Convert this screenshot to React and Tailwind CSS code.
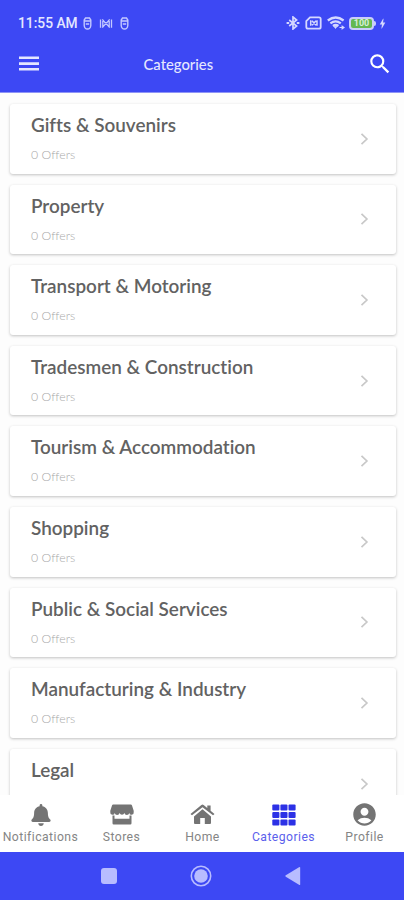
import { FaBell } from "react-icons/fa";
import { MdAccountCircle, MdSearch, MdBolt } from "react-icons/md";

const categories = [
  { name: "Gifts & Souvenirs", offers: "0 Offers" },
  { name: "Property", offers: "0 Offers" },
  { name: "Transport & Motoring", offers: "0 Offers" },
  { name: "Tradesmen & Construction", offers: "0 Offers" },
  { name: "Tourism & Accommodation", offers: "0 Offers" },
  { name: "Shopping", offers: "0 Offers" },
  { name: "Public & Social Services", offers: "0 Offers" },
  { name: "Manufacturing & Industry", offers: "0 Offers" },
  { name: "Legal" },
];

const tabs = [
  { label: "Notifications", icon: <FaBell size={22} /> },
  { label: "Stores", icon: <ShopIcon /> },
  { label: "Home", icon: <HomeIcon /> },
  { label: "Categories", icon: <GridIcon />, active: true },
  { label: "Profile", icon: <MdAccountCircle size={27} /> },
];

function ShopIcon() {
  return (
    <svg width="24" height="21" viewBox="0 0 24 21" fill="currentColor">
      <path d="M3.200.5h17.600q.9 0 1.200.9l1.700 5.300v1.600a2.200 2.200 0 0 1-4.400.6 2.500 2.500 0 0 1-4.900 0 2.500 2.500 0 0 1-4.800 0 2.500 2.500 0 0 1-4.900 0A2.200 2.200 0 0 1 .3 8.300V6.700L2 1.400Q2.300.5 3.200.5Z" />
      <path d="M2.500 11.500h2v3.200h15v-3.200h2v7.800q0 1.200-1.200 1.200H3.700q-1.200 0-1.200-1.200Z" />
    </svg>
  );
}

function HomeIcon() {
  return (
    <svg width="25" height="21" viewBox="0 0 25 21" fill="currentColor">
      <path d="M12.500 5.300 21 12.400v6.500q0 1-1 1h-5.200v-6h-4.600v6H5q-1 0-1-1v-6.500Z" />
      <path d="M1.300 10.800.5 9.900 11.400.9q1.100-.8 2.200 0l3.700 3.100V1.500h3.300v5.200l3.900 3.200-.8.9-.7.5L12.500 3.200 2 11.300Z" />
    </svg>
  );
}

function GridIcon() {
  return (
    <svg width="24" height="22" viewBox="0 0 24 22" fill="#2c31e6">
      {[0, 7.6, 15.2].map((y) =>
        [0.3, 8.4, 16.5].map((x) => (
          <rect key={`${x}-${y}`} x={x} y={y + 0.4} width="7.1" height="6" rx="1" />
        ))
      )}
    </svg>
  );
}

function MenuIcon() {
  return (
    <svg width="20" height="16" viewBox="0 0 20 16" fill="currentColor">
      <path d="M0 .5h20v2.600H0ZM0 6.300h20v2.600H0ZM0 12h20v2.600H0Z" />
    </svg>
  );
}

function BluetoothIcon() {
  return (
    <svg width="14" height="14" viewBox="0 0 14 14" fill="none" stroke="currentColor" strokeWidth="1.700">
      <path d="m3.200 4 7.400 6L7 13V1l3.600 3-7.400 6" />
      <path d="M.6 7h2.600M10.800 7h2.600" strokeWidth="2" />
    </svg>
  );
}

function CapsuleIcon() {
  return (
    <svg width="9" height="13" viewBox="0 0 9 13" fill="none" stroke="currentColor" strokeWidth="1.400">
      <path d="M2.500 1h4L7.800 3v5.500Q7.500 12 4.500 12T1.200 8.500V3ZM1.200 4h6.600M2.800 7h3.400" />
    </svg>
  );
}

function LinkIcon() {
  return (
    <svg width="14" height="11" viewBox="0 0 14 12" fill="none" stroke="currentColor" strokeWidth="1.400">
      <path d="M1 1.500v9M3 1.500 6 5h2l3-3.500M3 10.500 6 7h2l3 3.500M3.500 2v8M10.500 2v8M13 1.500v9" />
    </svg>
  );
}

function SimIcon() {
  return (
    <svg width="17" height="14" viewBox="0 0 17 14" fill="none" stroke="currentColor">
      <path strokeWidth="1.800" d="M5 1.300h9q1.700 0 1.700 1.700v8q0 1.700-1.700 1.700H3Q1.300 12.700 1.300 11V5Z" />
      <path strokeWidth="1.500" d="M5.700 4.300v5.500M7 4.800l4 4.500m0-4.500L7 9.300M12 4.300v5.500" />
    </svg>
  );
}

function WifiIcon() {
  return (
    <svg width="18" height="14" viewBox="0 0 18 14" fill="none" stroke="currentColor" strokeWidth="2.300">
      <path d="M.8 4.500q7.900-6 15.800 0M3.400 7.400q5.200-4 10.400 0M6 10q2.700-2 5.400 0" />
      <path d="m7 10.500 1.500 2 1.500-2Z" fill="currentColor" strokeWidth=".7" />
      <path d="M12.500 11.500H17M14.500 9.800l2.500 1.700-2.500 1.700" strokeWidth="1.200" />
    </svg>
  );
}

function Header() {
  return (
    <header className="h-[93px] shrink-0 border-b border-[#8e94f6] bg-[#3d48f4] text-[#e4e6ff]">
      <div className="flex h-[46px] items-center pl-[18px] pr-[18px]">
        <span className="w-[62px] whitespace-nowrap font-[Roboto,sans-serif] text-[13.800px] font-medium">11:55 AM</span>
        <div className="ml-[3px] flex items-center gap-[7px] text-[#c3c8ff]">
          <CapsuleIcon />
          <LinkIcon />
          <CapsuleIcon />
        </div>
        <div className="ml-auto flex items-center text-[#d5d8ff]">
          <BluetoothIcon />
          <span className="ml-[5px]"><SimIcon /></span>
          <span className="ml-[5px]"><WifiIcon /></span>
          <div className="ml-[4px] flex h-[13px] w-[25px] items-center justify-center rounded-[4px] border-2 border-[#c9cefa] bg-[#64b852] font-[Roboto,sans-serif] text-[9px] font-bold leading-none text-[#d9f0d8]">
            100
          </div>
          <div className="h-[5px] w-[2px] rounded-r-sm bg-[#c9cefa]" />
          <MdBolt size={13} className="-mr-[3px]" />
        </div>
      </div>
      <div className="flex h-9 items-center pl-[19px] pr-[11px]">
        <MenuIcon />
        <h1 className="ml-[104.500px] font-[Lato,sans-serif] text-[14.800px] font-medium leading-5">Categories</h1>
        <MdSearch size={26} className="ml-auto text-white" />
      </div>
    </header>
  );
}

function CategoryCard({ name, offers }) {
  return (
    <article className="flex h-[69.600px] shrink-0 items-center rounded-[3px] bg-white pl-[21px] pr-[26px] shadow-[0_1px_3px_rgba(0,0,0,0.240)]">
      <div className="h-full font-[Lato,sans-serif] [font-variant-ligatures:none]">
        <h2 className="mt-[9px] text-[18.900px] font-semibold leading-6 text-[#626262]">{name}</h2>
        {offers && <p className="mt-[9px] text-[12.300px] font-light leading-[18px] text-[#a8a8a8]">{offers}</p>}
      </div>
      <svg className="ml-auto" width="10" height="14" viewBox="0 0 10 14" fill="none" stroke="#c8c8c8" strokeWidth="1.700">
        <path d="m1.500 1.800 5.400 5.200-5.400 5.200" />
      </svg>
    </article>
  );
}

function Tab({ label, icon, active }) {
  return (
    <div className={`flex w-[81px] shrink-0 flex-col items-center ${active ? "text-[#373fe8]" : "text-[#747474]"}`}>
      <div className="flex h-[27px] items-center justify-center">{icon}</div>
      <span className={`mt-px whitespace-nowrap font-[Roboto,sans-serif] text-[12.200px] leading-4 tracking-[0.450px] ${active ? "text-[#5b61ec]" : "text-[#858585]"}`}>
        {label}
      </span>
    </div>
  );
}

export default function App() {
  return (
    <div className="flex h-[900px] w-[404px] flex-col overflow-hidden bg-[#fdfdfd]">
      <Header />
      <main className="flex min-h-0 flex-1 flex-col gap-[11px] overflow-hidden pl-[10px] pr-[8.500px] pt-[11px]">
        {categories.map((category) => (
          <CategoryCard key={category.name} {...category} />
        ))}
      </main>
      <nav className="flex h-[57px] shrink-0 bg-white pt-[6px]">
        {tabs.map((tab) => (
          <Tab key={tab.label} {...tab} />
        ))}
      </nav>
      <footer className="flex h-12 shrink-0 items-center bg-[#3d48f4] pl-[101px]">
        <div className="h-4 w-4 rounded-[3px] bg-[#b8bcff]" />
        <svg className="ml-[73px]" width="22" height="22" viewBox="0 0 22 22" fill="none">
          <circle cx="11" cy="11" r="9.700" stroke="#b8bcff" strokeWidth="1.600" />
          <circle cx="11" cy="11" r="6.800" fill="#b8bcff" />
        </svg>
        <svg className="ml-[73px]" width="16" height="20" viewBox="0 0 16 20" fill="#b8bcff">
          <path d="M.8 9.300 14 1.200q1.200-.7 1.200.6v16.400q0 1.300-1.200.6L.8 10.700q-1-.7 0-1.400Z" />
        </svg>
      </footer>
    </div>
  );
}
